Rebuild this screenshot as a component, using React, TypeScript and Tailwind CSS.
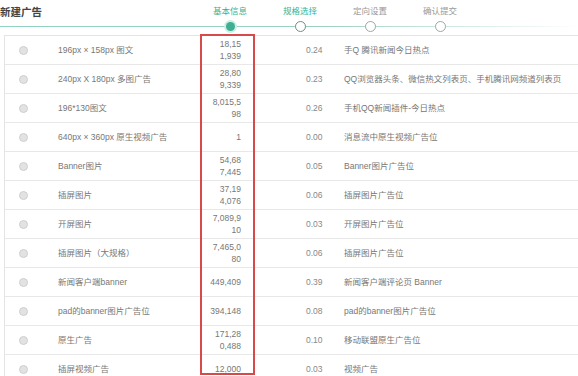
import React from "react";

type Row = { name: string; num: string[]; price: string; desc: string };

const rows: Row[] = [
  { name: "196px × 158px 图文", num: ["18,15", "1,939"], price: "0.24", desc: "手Q 腾讯新闻今日热点" },
  { name: "240px X 180px 多图广告", num: ["28,80", "9,339"], price: "0.23", desc: "QQ浏览器头条、微信热文列表页、手机腾讯网频道列表页" },
  { name: "196*130图文", num: ["8,015,5", "98"], price: "0.26", desc: "手机QQ新闻插件-今日热点" },
  { name: "640px × 360px 原生视频广告", num: ["1"], price: "0.00", desc: "消息流中原生视频广告位" },
  { name: "Banner图片", num: ["54,68", "7,445"], price: "0.05", desc: "Banner图片广告位" },
  { name: "插屏图片", num: ["37,19", "4,076"], price: "0.06", desc: "插屏图片广告位" },
  { name: "开屏图片", num: ["7,089,9", "10"], price: "0.03", desc: "开屏图片广告位" },
  { name: "插屏图片（大规格）", num: ["7,465,0", "80"], price: "0.06", desc: "插屏图片广告位" },
  { name: "新闻客户端banner", num: ["449,409"], price: "0.39", desc: "新闻客户端评论页 Banner" },
  { name: "pad的banner图片广告位", num: ["394,148"], price: "0.08", desc: "pad的banner图片广告位" },
  { name: "原生广告", num: ["171,28", "0,488"], price: "0.10", desc: "移动联盟原生广告位" },
  { name: "插屏视频广告", num: ["12,000"], price: "0.03", desc: "视频广告" },
];

const steps = [
  { label: "基本信息", state: "done" },
  { label: "规格选择", state: "active" },
  { label: "定向设置", state: "todo" },
  { label: "确认提交", state: "todo" },
];

export default function App() {
  return (
    <div
      className="w-[578px] h-[376px] overflow-hidden bg-white text-[#777] relative"
      style={{ fontFamily: '"Liberation Sans", "Noto Sans CJK SC", sans-serif' }}
    >
      {/* header */}
      <div className="relative h-[35px] flex">
        <div className="absolute left-0 right-0 top-[26px] h-px bg-gradient-to-r from-[#8fd3c1] via-[#9bcfc1] via-55% to-white"></div>
        <div className="w-[195px] shrink-0 pt-[5px] text-[10.5px] font-bold text-[#444] leading-[14px]">新建广告</div>
        <div className="flex">
          {steps.map((s) => (
            <div key={s.label} className="w-[70px] shrink-0 flex flex-col items-center relative">
              <div
                className={
                  "text-[8.5px] leading-[12px] mt-[5px] " +
                  (s.state === "todo" ? "text-[#999]" : "text-[#35b394]")
                }
              >
                {s.label}
              </div>
              <div className="mt-[4px] h-[10px] flex items-center justify-center">
                {s.state === "done" ? (
                  <div className="w-[9px] h-[9px] rounded-full bg-[#3fae92] ring-2 ring-[#cfeee5]"></div>
                ) : s.state === "active" ? (
                  <div className="w-[11px] h-[11px] rounded-full bg-white border border-[#6d8f85]"></div>
                ) : (
                  <div className="w-[11px] h-[11px] rounded-full bg-white border border-[#9aa9a4]"></div>
                )}
              </div>
            </div>
          ))}
        </div>
      </div>

      {/* table */}
      <div className="relative ml-[4px] border-l border-[#e4e4e4] border-t">
        {rows.map((r) => (
          <div key={r.name} className="flex h-[29px] border-b border-[#e8e8e8] text-[8.5px]">
            <div className="w-[36px] shrink-0 flex items-center justify-center">
              <div className="w-[9px] h-[9px] rounded-full bg-[#e2e2e2] border border-[#cfcfcf]"></div>
            </div>
            <div className="w-[160px] shrink-0 pl-[17px] flex items-center text-[#777]">{r.name}</div>
            <div className="w-[54px] shrink-0 pr-[14px] flex flex-col justify-center items-end leading-[12px] text-[#777]">
              {r.num.map((n) => (
                <span key={n}>{n}</span>
              ))}
            </div>
            <div className="w-[89px] shrink-0 pl-[51px] flex items-center text-[#888]">{r.price}</div>
            <div className="flex-1 flex items-center text-[#777] whitespace-nowrap">{r.desc}</div>
          </div>
        ))}
        <div className="absolute left-[195px] w-[55px] top-[-2px] h-[341px] border-2 border-[#d84a4a]"></div>
      </div>
    </div>
  );
}
